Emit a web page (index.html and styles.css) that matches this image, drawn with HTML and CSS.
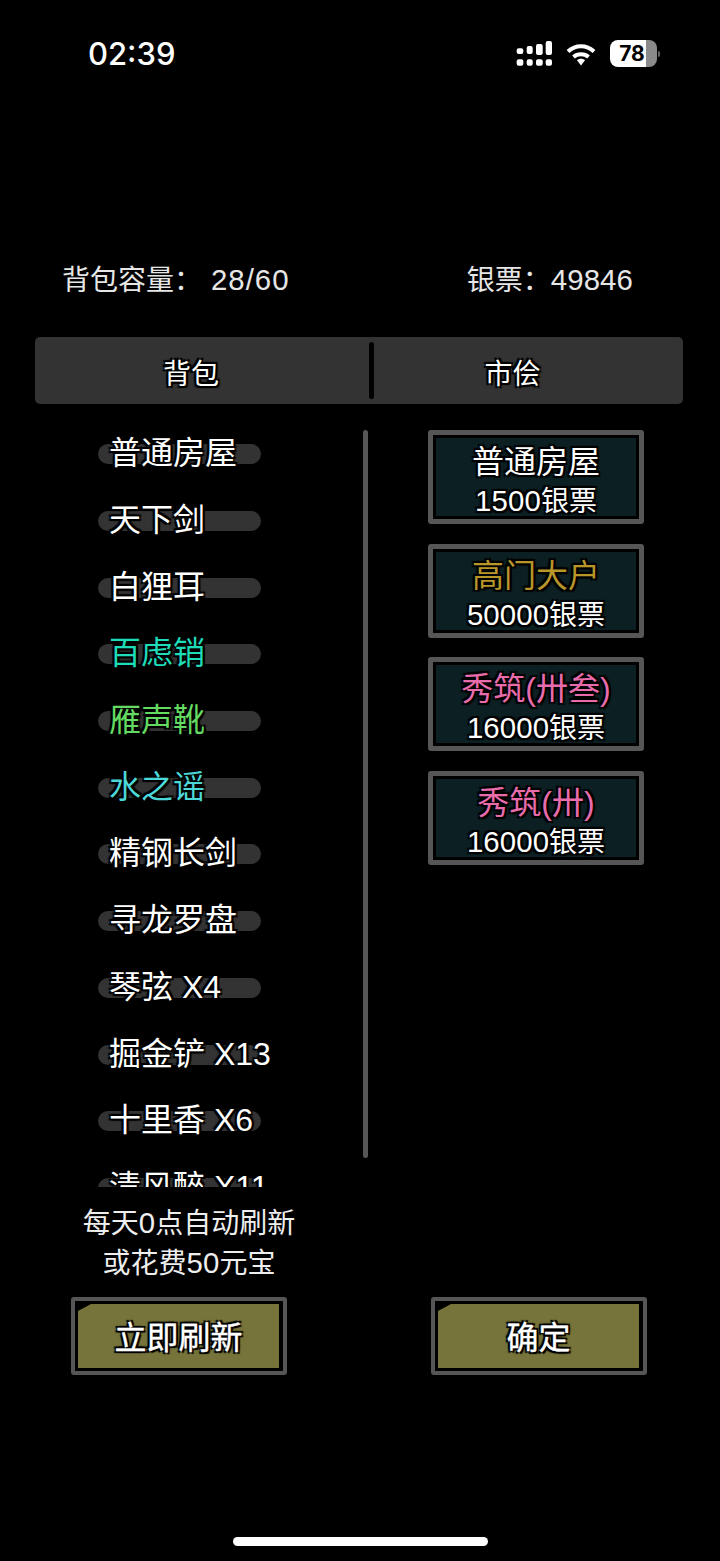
FILE: index.html
```html
<!DOCTYPE html>
<html lang="zh-CN">
<head>
    <meta charset="UTF-8">
    <title>市侩</title>
    <link rel="stylesheet" href="styles.css">
</head>
<body>
    <div class="status-bar">
        <span class="clock">02:39</span>
        <div class="status-icons">
            <svg class="signal" width="36" height="26" viewBox="0 0 36 26" fill="#fff">
                <rect x="0.7" y="8.3" width="6.6" height="5.7" rx="2"/>
                <rect x="10.7" y="6" width="6" height="8" rx="2"/>
                <rect x="20" y="4" width="6.7" height="11" rx="2"/>
                <rect x="29.7" y="1" width="6.3" height="14" rx="2"/>
                <rect x="0.7" y="19.3" width="6.6" height="6.4" rx="2"/>
                <rect x="10.7" y="19.3" width="6" height="6.4" rx="2"/>
                <rect x="20" y="19.3" width="6.7" height="6.4" rx="2"/>
                <rect x="29.7" y="19.3" width="6.3" height="6.4" rx="2"/>
            </svg>
            <svg class="wifi" width="30" height="23" viewBox="0 0 30 23" fill="none" stroke="#fff" stroke-width="4">
                <path d="M2 8.5C9.5 1.5 20.5 1.5 28 8.5"/>
                <path d="M7.5 14C11.5 10.3 18.5 10.3 22.5 14"/>
                <path d="M11 17.2L15 22.5L19 17.2C17 15.2 13 15.2 11 17.2Z" fill="#fff" stroke="none"/>
            </svg>
            <div class="battery">
                <div class="battery-body"><span>78</span></div>
                <div class="battery-nub"></div>
            </div>
        </div>
    </div>

    <div class="bag-info">
        <span>背包容量：<b class="num capacity">28/60</b></span>
        <span>银票：<b class="num">49846</b></span>
    </div>

    <div class="tabs">
        <div class="tab tab-bag">背包</div>
        <div class="tab-line"></div>
        <div class="tab tab-market">市侩</div>
    </div>

    <div class="content">
        <div class="left-col">
            <div class="bag-row">
                <ul class="bag-list">
                    <li class="bag-item"><i class="pill"></i><span>普通房屋</span></li>
                    <li class="bag-item"><i class="pill"></i><span>天下剑</span></li>
                    <li class="bag-item"><i class="pill"></i><span>白狸耳</span></li>
                    <li class="bag-item teal"><i class="pill"></i><span>百虑销</span></li>
                    <li class="bag-item green"><i class="pill"></i><span>雁声靴</span></li>
                    <li class="bag-item cyan"><i class="pill"></i><span>水之谣</span></li>
                    <li class="bag-item"><i class="pill"></i><span>精钢长剑</span></li>
                    <li class="bag-item"><i class="pill"></i><span>寻龙罗盘</span></li>
                    <li class="bag-item"><i class="pill"></i><span>琴弦 X4</span></li>
                    <li class="bag-item"><i class="pill"></i><span>掘金铲 X13</span></li>
                    <li class="bag-item"><i class="pill"></i><span>十里香 X6</span></li>
                    <li class="bag-item"><i class="pill"></i><span>清风醉 X11</span></li>
                </ul>
                <div class="scrollbar"></div>
            </div>
            <p class="refresh-note">每天<b class="num">0</b>点自动刷新<br>或花费<b class="num">50</b>元宝</p>
        </div>

        <div class="market">
            <div class="card">
                <div class="card-name">普通房屋</div>
                <div class="card-price"><b class="num">1500</b>银票</div>
            </div>
            <div class="card">
                <div class="card-name gold">高门大户</div>
                <div class="card-price"><b class="num">50000</b>银票</div>
            </div>
            <div class="card">
                <div class="card-name pink">秀筑(卅叁)</div>
                <div class="card-price"><b class="num">16000</b>银票</div>
            </div>
            <div class="card">
                <div class="card-name pink">秀筑(卅)</div>
                <div class="card-price"><b class="num">16000</b>银票</div>
            </div>
        </div>
    </div>

    <div class="actions">
        <div class="btn"><div class="btn-fill">立即刷新</div></div>
        <div class="btn"><div class="btn-fill">确定</div></div>
    </div>

    <div class="home-bar"></div>
</body>
</html>
```

FILE: styles.css
```css
:root {
    --line-gray: #565656;
    --panel-gray: #333333;
    --card-bg: #0c2023;
    --btn-bg: #76743a;
    --outline: 1px 0 1px #000, -1px 0 1px #000, 0 1px 1px #000, 0 -1px 1px #000, 2px 2px 1px #000, -2px 2px 1px #000, 2px -2px 1px #000, -2px -2px 1px #000;
}

* {
    box-sizing: border-box;
}

html, body {
    margin: 0;
    height: 1561px;
    overflow: hidden;
}

body {
    background-color: #000;
    color: #fff;
    font-family: "Liberation Sans", "Noto Sans CJK SC", sans-serif;
    display: flex;
    flex-direction: column;
}

/* digits run a little wider than the CJK text around them */
.num {
    font-weight: 400;
    font-size: 1.05em;
    letter-spacing: 0.1px;
}

/* status bar */
.status-bar {
    height: 100px;
    padding: 36px 60px 0 88px;
    display: flex;
    justify-content: space-between;
    align-items: flex-start;
}

.clock {
    font-family: Inter, sans-serif;
    font-size: 31px;
    font-weight: 500;
    line-height: 36px;
}

.status-icons {
    display: flex;
    align-items: flex-start;
    padding-top: 4px;
}

.signal {
    margin-right: 14px;
}

.wifi {
    margin-top: 3px;
    margin-right: 14px;
}

.battery {
    display: flex;
    align-items: center;
}

.battery-body {
    width: 47px;
    height: 27px;
    border-radius: 8px;
    background: linear-gradient(to right, #fff 36px, #8a8a8a 36px);
    color: #000;
    font-family: Inter, sans-serif;
    font-size: 21px;
    font-weight: 700;
    line-height: 27px;
    text-align: center;
    padding-right: 3px;
}

.battery-nub {
    width: 2px;
    height: 6px;
    margin-left: 1px;
    border-radius: 0 2px 2px 0;
    background: #666;
}

/* top info */
.bag-info {
    margin-top: 157px;
    height: 42px;
    padding: 0 87px 0 62px;
    display: flex;
    justify-content: space-between;
    align-items: center;
    font-size: 28px;
    color: #e6e6e6;
}

.capacity {
    margin-left: 9px;
    letter-spacing: 1px;
}

/* tabs */
.tabs {
    margin: 38px 37px 0 35px;
    height: 67px;
    background: var(--panel-gray);
    border-radius: 5px;
    display: flex;
    align-items: center;
}

.tab {
    padding-top: 3px;
    text-align: center;
    font-size: 28px;
    text-shadow: var(--outline);
}

.tab-bag {
    width: 334px;
    padding-right: 22px;
}

.tab-market {
    flex: 1;
    padding-right: 32px;
}

.tab-line {
    width: 5px;
    height: 57px;
    background: #000;
    border-radius: 3px;
}

/* main area */
.content {
    margin-top: 17px;
    display: flex;
    align-items: flex-start;
}

.left-col {
    width: 428px;
}

.bag-row {
    display: flex;
    align-items: flex-start;
}

.bag-list {
    list-style: none;
    margin: 0;
    padding: 0 0 0 98px;
    width: 363px;
    height: 766px;
    overflow: hidden;
}

.bag-item {
    height: 66.7px;
    display: grid;
    grid-template-columns: 163px;
    align-items: center;
    font-size: 32px;
    line-height: 40px;
    white-space: nowrap;
    text-shadow: var(--outline);
}

.bag-item > * {
    grid-area: 1 / 1;
}

.bag-item span {
    margin-left: 11px;
    margin-bottom: 2px;
}

.pill {
    display: block;
    height: 20px;
    border-radius: 10px;
    background: var(--panel-gray);
}

.teal { color: #1fdcb8; }
.green { color: #64da62; }
.cyan { color: #4cd8d8; }
.gold { color: #b8962a; }
.pink { color: #e86cac; }

.scrollbar {
    width: 5px;
    height: 728px;
    margin-top: 9px;
    border-radius: 3px;
    background: var(--line-gray);
}

.refresh-note {
    margin: 16px 0 0;
    width: 378px;
    text-align: center;
    font-size: 28px;
    line-height: 39px;
    color: #eee;
}

/* market cards */
.market {
    margin-top: 9px;
    width: 216px;
    display: flex;
    flex-direction: column;
    gap: 19.67px;
}

.card {
    height: 94px;
    border: 5px solid var(--line-gray);
    border-radius: 3px;
    background: var(--card-bg);
    box-shadow: inset 0 0 0 3px #000;
    padding-top: 6px;
    text-align: center;
    text-shadow: var(--outline);
}

.card-name {
    font-size: 32px;
    line-height: 42px;
}

.card-price {
    font-size: 28px;
    line-height: 36px;
}

/* bottom buttons */
.actions {
    margin-top: 14px;
    padding: 0 73px 0 71px;
    display: flex;
    justify-content: space-between;
}

.btn {
    width: 216px;
    height: 78px;
    border: 4px solid var(--line-gray);
    border-radius: 3px;
    background: #000;
    padding: 3px 4px 3px 3px;
}

.btn-fill {
    height: 100%;
    padding-bottom: 3px;
    background: var(--btn-bg);
    clip-path: polygon(13px 0, 100% 0, 100% 100%, 0 100%, 0 7px);
    display: flex;
    align-items: center;
    justify-content: center;
    font-size: 32px;
    -webkit-text-stroke: 0.4px #fff;
    text-shadow: var(--outline);
}

.home-bar {
    margin: auto auto 15px;
    width: 255px;
    height: 9px;
    border-radius: 5px;
    background: #fff;
}
```
